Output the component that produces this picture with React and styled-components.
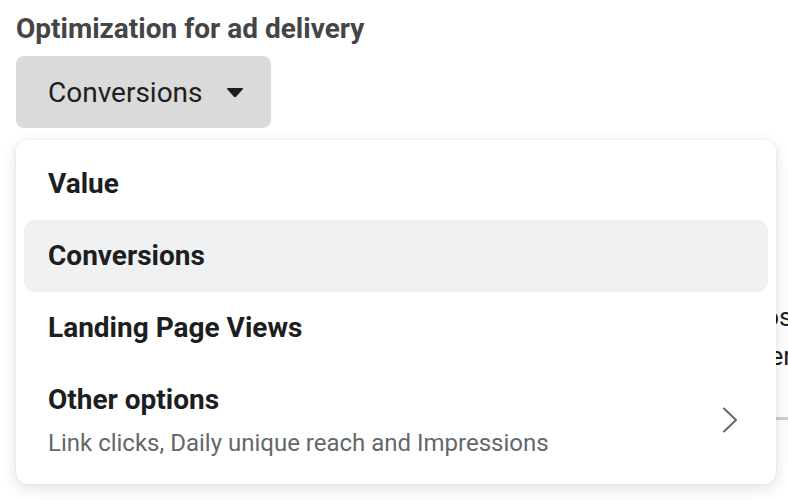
import React from 'react';
import styled, { createGlobalStyle } from 'styled-components';

const GlobalStyle = createGlobalStyle`
  html, body {
    margin: 0;
    background: #ffffff;
    font-family: Roboto, "Liberation Sans", sans-serif;
    overflow: hidden;
  }
`;

const Page = styled.div`
  position: relative;
  width: 788px;
  height: 500px;
  padding: 13px 16px 0 16px;
  box-sizing: border-box;
  overflow: hidden;
`;

const Heading = styled.div`
  font-size: 28px;
  font-weight: 700;
  color: #444547;
  line-height: 32px;
`;

const SelectButton = styled.button`
  margin-top: 11px;
  display: flex;
  align-items: center;
  gap: 23px;
  height: 72px;
  padding: 0 27px 0 32px;
  border: none;
  border-radius: 8px;
  background: #dadada;
  font-family: inherit;
  font-size: 28px;
  color: #1c1e21;
`;

const Behind = styled.div`
  margin-top: 170px;
  margin-right: -16px;
  font-size: 26px;
  color: #1c1e21;
`;

const BehindLine = styled.div`
  white-space: nowrap;
  text-align: right;
  line-height: 39px;
  margin-right: ${p => p.$shift}px;
`;

const Divider = styled.div`
  margin-top: 41px;
  height: 3px;
  background: #ccd0d5;
`;

const BlueLink = styled.div`
  margin-top: 31px;
  padding-left: 2px;
  color: #216fdb;
  font-size: 26px;
  line-height: 28px;
  font-weight: 500;
`;

const Menu = styled.div`
  position: absolute;
  left: 16px;
  top: 140px;
  width: 760px;
  box-sizing: border-box;
  padding: 8px 0;
  background: #ffffff;
  border-radius: 12px;
  box-shadow: 0 4px 16px rgba(0, 0, 0, 0.12), 0 0 2px rgba(0, 0, 0, 0.1);
`;

const Item = styled.div`
  display: flex;
  align-items: center;
  justify-content: space-between;
  margin: 0 8px;
  padding: 0 30px 0 24px;
  height: ${p => (p.$tall ? 112 : 72)}px;
  border-radius: 10px;
  background: ${p => (p.$active ? '#f0f1f3' : 'transparent')};
`;

const ItemText = styled.div`
  display: flex;
  flex-direction: column;
  gap: 13px;
`;

const ItemTitle = styled.div`
  font-size: 28px;
  font-weight: 700;
  color: #1c1e21;
  line-height: 32px;
`;

const ItemSub = styled.div`
  font-size: 24px;
  color: #65676b;
  line-height: 28px;
`;

const Caret = () => (
  <svg width="18" height="11" viewBox="0 0 18 11">
    <path d="M2 1 H16 Q18 1 16.6 2.6 L10.3 9.6 Q9 11 7.7 9.6 L1.4 2.6 Q0 1 2 1 Z" fill="#1c1e21" />
  </svg>
);

const Chevron = () => (
  <svg width="16" height="26" viewBox="0 0 16 26">
    <path d="M2 1.5 L14 13 L2 24.5" fill="none" stroke="#606770" strokeWidth="2" strokeLinecap="round" strokeLinejoin="round" />
  </svg>
);

export default function App() {
  return (
    <Page>
      <GlobalStyle />
      <Heading>Optimization for ad delivery</Heading>
      <SelectButton>
        Conversions
        <Caret />
      </SelectButton>

      <Behind>
        <BehindLine $shift={-13}>We'll show ads to people at the lowest cost</BehindLine>
        <BehindLine $shift={-4}>and spend your budget to deliver</BehindLine>
        <Divider />
        <BlueLink>Hide options</BlueLink>
      </Behind>

      <Menu>
        <Item>
          <ItemTitle>Value</ItemTitle>
        </Item>
        <Item $active>
          <ItemTitle>Conversions</ItemTitle>
        </Item>
        <Item>
          <ItemTitle>Landing Page Views</ItemTitle>
        </Item>
        <Item $tall>
          <ItemText>
            <ItemTitle>Other options</ItemTitle>
            <ItemSub>Link clicks, Daily unique reach and Impressions</ItemSub>
          </ItemText>
          <Chevron />
        </Item>
      </Menu>
    </Page>
  );
}
